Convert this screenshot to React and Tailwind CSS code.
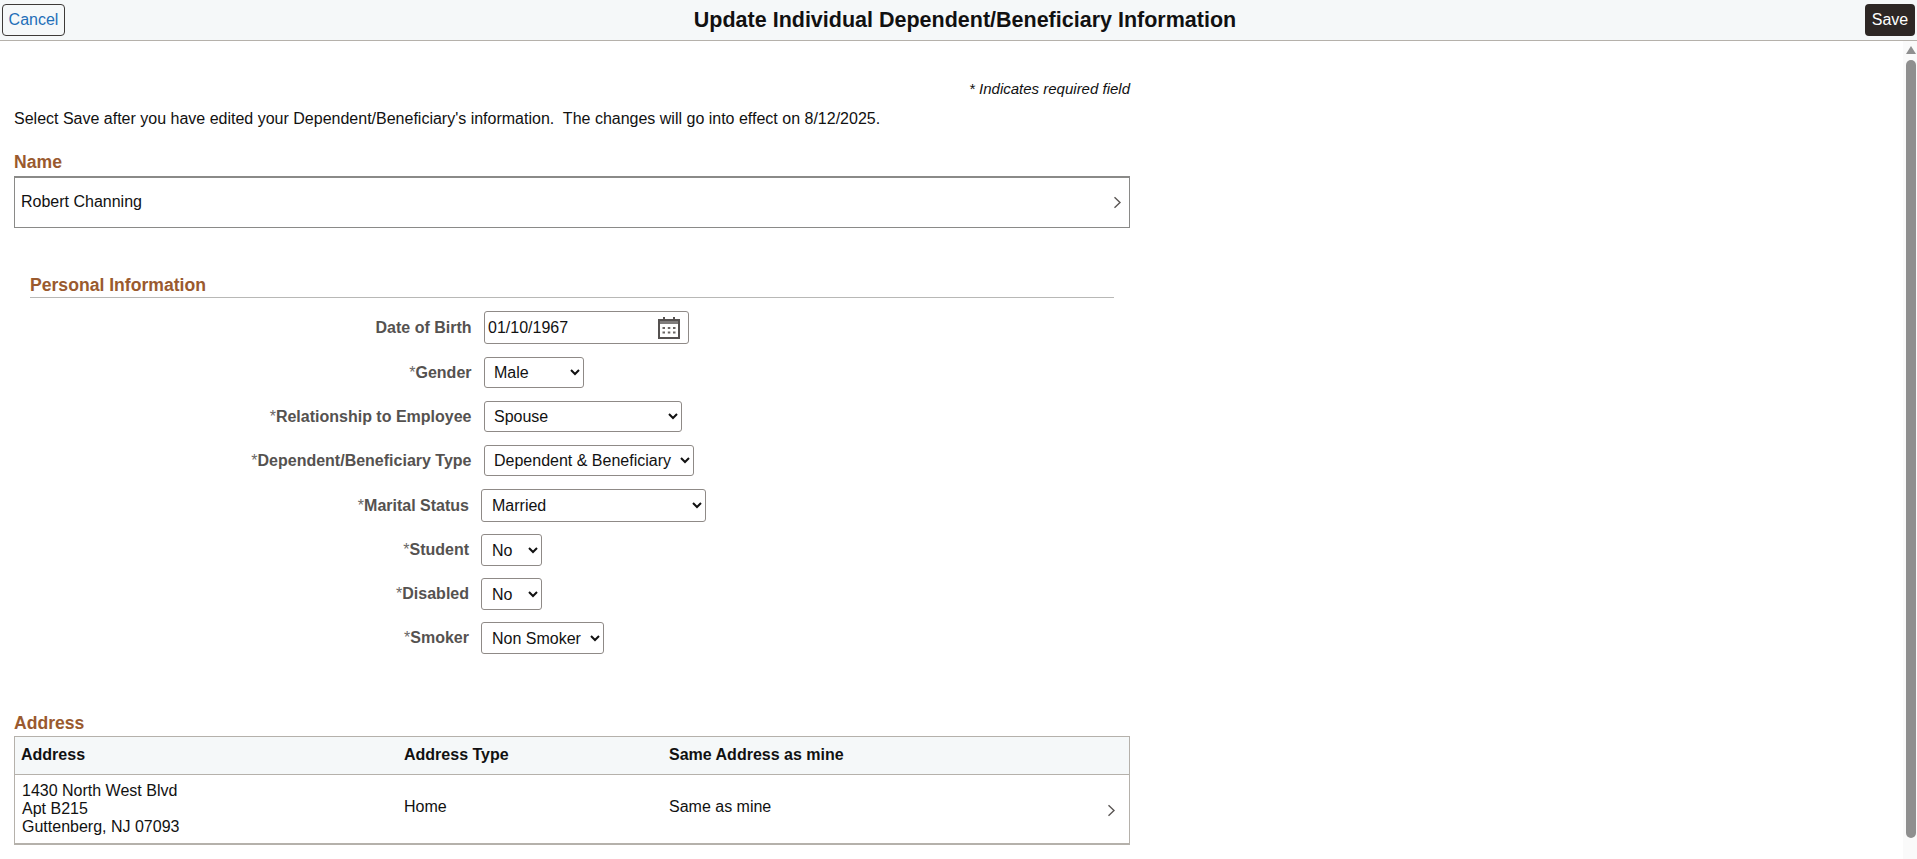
import React from "react";

const font = "font-['Liberation_Sans',Arial,sans-serif]";

function Chevron({ className }) {
  return (
    <svg width="9" height="13" viewBox="0 0 9 13" fill="none" className={className}>
      <path d="M1.5 1.2 7 6.5 1.5 11.8" stroke="#5a5654" strokeWidth="1.4" />
    </svg>
  );
}

function CalendarIcon() {
  return (
    <svg width="22" height="22" viewBox="0 0 22 22" fill="none">
      <rect x="1" y="3" width="20" height="18" stroke="#555150" strokeWidth="2" />
      <rect x="1" y="3" width="20" height="4" fill="#555150" opacity="0.75" />
      <path d="M6 0V4M16 0V4" stroke="#555150" strokeWidth="2" />
      <path d="M4.5 11h2.5M9.8 11h2.5M15 11h2.5M4.5 15.5h2.5M9.8 15.5h2.5M15 15.5h2.5" stroke="#6a6664" strokeWidth="2" />
    </svg>
  );
}

function Row({ label, required, outer, children, top }) {
  return (
    <div className={`flex items-center ${top}`}>
      <div className={`${outer} shrink-0 text-right text-base font-bold text-[#555250]`}>
        {required && <span className="font-normal text-[#6b6866]">*</span>}
        {label}
      </div>
      {children}
    </div>
  );
}

function Sel({ value, options, className }) {
  return (
    <select
      defaultValue={value}
      className={`rounded-[3px] border border-[#8f8a87] bg-white text-base text-[#111] ${className}`}
    >
      {options.map((o) => (
        <option key={o}>{o}</option>
      ))}
    </select>
  );
}

export default function App() {
  return (
    <div className={`${font} flex h-[859px] w-full flex-col overflow-hidden bg-white text-base text-[#111]`}>
      <header className="flex h-[41px] shrink-0 items-start justify-between border-b border-[#b5b1ab] bg-[#f5f8f9] px-[2px] pt-[4px]">
        <button className="h-[32px] w-[63px] rounded-[4px] border border-[#3d3a38] text-base text-[#1f6fb8]">
          Cancel
        </button>
        <h1 className="mt-[4px] text-[21.5px] leading-6 font-bold text-[#111]">
          Update Individual Dependent/Beneficiary Information
        </h1>
        <button className="h-[32px] w-[50px] rounded-[4px] bg-[#2d2725] text-base text-white">Save</button>
      </header>

      <div className="flex min-h-0 flex-1">
        <main className="w-[1130px] shrink-0 pl-[14px]">
          <p className="mt-[40px] text-right text-[15px] leading-4 italic">* Indicates required field</p>
          <p className="mt-[13px] leading-[18px]">
            Select Save after you have edited your Dependent/Beneficiary's information.&nbsp; The changes will go into effect on 8/12/2025.
          </p>

          <h2 className="mt-[24px] text-[17.6px] leading-5 font-bold text-[#9a5a2e]">Name</h2>
          <div className="mt-[4px] flex h-[52px] items-center justify-between border border-t-2 border-[#8a8a88] pr-[7px] pl-[6px]">
            <span className="-mt-[1px]">Robert Channing</span>
            <Chevron />
          </div>

          <section className="mx-[16px] mt-[47px]">
            <h2 className="border-b border-[#b8b8b6] pb-[2px] text-[17.6px] leading-5 font-bold text-[#9a5a2e]">
              Personal Information
            </h2>
          </section>

          <div className="mt-[13px]">
            <Row label="Date of Birth" outer="w-[457.5px] mr-[12.5px]" top="">
              <div className="flex h-[33px] w-[205px] items-center justify-between rounded-[3px] border border-[#8f8a87] pr-[8px] pl-[3px]">
                <span>01/10/1967</span>
                <CalendarIcon />
              </div>
            </Row>
            <Row label="Gender" required outer="w-[457.5px] mr-[12.5px]" top="mt-[13px]">
              <Sel value="Male" options={["Male", "Female"]} className="h-[31px] w-[100px] pl-[5px]" />
            </Row>
            <Row label="Relationship to Employee" required outer="w-[457.5px] mr-[12.5px]" top="mt-[13px]">
              <Sel value="Spouse" options={["Spouse", "Child"]} className="h-[31px] w-[198px] pl-[5px]" />
            </Row>
            <Row label="Dependent/Beneficiary Type" required outer="w-[457.5px] mr-[12.5px]" top="mt-[13px]">
              <Sel value="Dependent & Beneficiary" options={["Dependent & Beneficiary", "Dependent"]} className="h-[31px] w-[210px] pl-[5px]" />
            </Row>
            <Row label="Marital Status" required outer="w-[455px] mr-[12px]" top="mt-[13px]">
              <Sel value="Married" options={["Married", "Single"]} className="h-[33px] w-[225px] pl-[6px]" />
            </Row>
            <Row label="Student" required outer="w-[455px] mr-[12px]" top="mt-[12px]">
              <Sel value="No" options={["No", "Yes"]} className="h-[32px] w-[61px] pl-[6px]" />
            </Row>
            <Row label="Disabled" required outer="w-[455px] mr-[12px]" top="mt-[12px]">
              <Sel value="No" options={["No", "Yes"]} className="h-[32px] w-[61px] pl-[6px]" />
            </Row>
            <Row label="Smoker" required outer="w-[455px] mr-[12px]" top="mt-[12px]">
              <Sel value="Non Smoker" options={["Non Smoker", "Smoker"]} className="h-[32px] w-[123px] pl-[6px]" />
            </Row>
          </div>

          <h2 className="mt-[59px] text-[17.6px] leading-5 font-bold text-[#9a5a2e]">Address</h2>
          <div className="mt-[3px] border border-b-2 border-[#b5b1ab]">
            <div className="grid h-[38px] grid-cols-[383px_265px_1fr] items-center border-b border-[#b5b1ab] bg-[#f5f8f9] pl-[6px] font-bold text-[#111]">
              <span className="-mt-[1px]">Address</span>
              <span className="-mt-[1px]">Address Type</span>
              <span className="-mt-[1px]">Same Address as mine</span>
            </div>
            <div className="grid h-[68px] grid-cols-[382px_265px_1fr_auto] items-center pr-[13px] pl-[7px]">
              <div className="leading-[18px]">
                <div>1430 North West Blvd</div>
                <div>Apt B215</div>
                <div>Guttenberg, NJ 07093</div>
              </div>
              <span className="-mt-[4px]">Home</span>
              <span className="-mt-[4px]">Same as mine</span>
              <Chevron className="mt-[2px]" />
            </div>
          </div>
        </main>

        <div className="ml-auto flex w-[14px] shrink-0 flex-col items-end bg-[#fafafa] pr-[1px]">
          <div className="mt-[5px] h-0 w-0 border-x-[5px] border-b-[8px] border-x-transparent border-b-[#8f8f8f]" />
          <div className="mt-[6px] h-[778px] w-[10px] rounded-full bg-[#8f8f8f]" />
        </div>
      </div>
    </div>
  );
}
